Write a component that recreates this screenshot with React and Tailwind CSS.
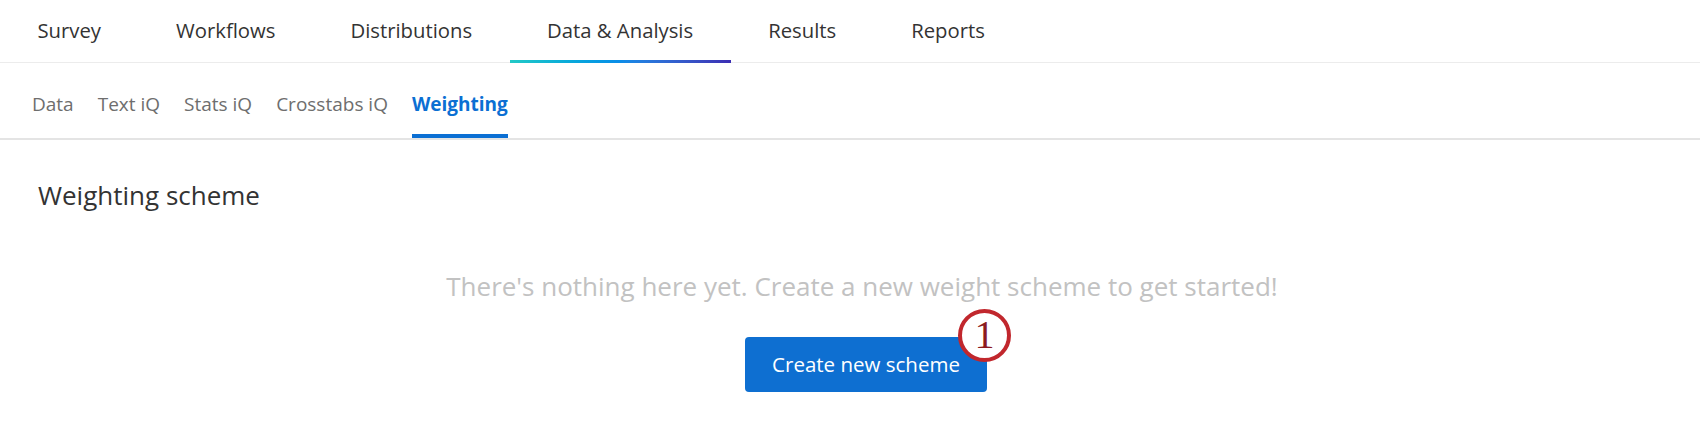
import { useState } from 'react';

const mainTabs = ['Survey', 'Workflows', 'Distributions', 'Data & Analysis', 'Results', 'Reports'];
const subTabs = ['Data', 'Text iQ', 'Stats iQ', 'Crosstabs iQ', 'Weighting'];

export default function App() {
  const [tab, setTab] = useState('Data & Analysis');
  const [sub, setSub] = useState('Weighting');

  return (
    <div className="w-[1700px] h-[432px] bg-white overflow-hidden" style={{ fontFamily: '"Open Sans", "Noto Sans", sans-serif' }}>
      {/* Main nav */}
      <div className="flex h-[63px] border-b border-[#ececec]">
        {mainTabs.map(t => (
          <button
            key={t}
            onClick={() => setTab(t)}
            className="relative px-[37.5px] h-full flex items-center text-[20.3px] text-[#333] pb-[1px]"
          >
            {t}
            {tab === t && (
              <span className="absolute left-0 right-0 bottom-[-1px] h-[3px] bg-gradient-to-r from-[#22c9c6] via-[#0b8ce8] to-[#3b2db3]" />
            )}
          </button>
        ))}
      </div>

      {/* Sub nav */}
      <div className="flex gap-[24px] pl-[32px] h-[77px] border-b-2 border-[#e4e4e4]">
        {subTabs.map(s => (
          <button
            key={s}
            onClick={() => setSub(s)}
            className={`relative h-full flex items-center pt-[8px] text-[19px] ${sub === s ? 'text-[#0b6fd3] font-bold' : 'text-[#6e6e6e]'}`}
          >
            {s}
            {sub === s && <span className="absolute left-0 right-0 bottom-[0px] h-[4px] bg-[#0b6fd3]" />}
          </button>
        ))}
      </div>

      {/* Content */}
      <div className="pl-[32px]">
        <h2 className="pl-[6px] pt-[38px] text-[26px] leading-[34px] text-[#333]">Weighting scheme</h2>
        <div className="flex flex-col items-center">
          <p className="mt-[56px] mr-[8px] text-[26px] leading-[36px] text-[#c2c2c2]">
            There's nothing here yet. Create a new weight scheme to get started!
          </p>
          <div className="relative mt-[33px]">
            <button className="w-[242px] h-[55px] rounded-[4px] bg-[#0e6fd1] text-white text-[20.5px] font-medium">
              Create new scheme
            </button>
            <span className="absolute -right-[24px] -top-[28px] w-[53px] h-[53px] rounded-full bg-white border-[4px] border-[#c1272d] flex items-center justify-center text-[40px] leading-none text-[#8c1a20] pb-[2px]" style={{ fontFamily: '"Liberation Serif", serif' }}>
              1
            </span>
          </div>
        </div>
      </div>
    </div>
  );
}
